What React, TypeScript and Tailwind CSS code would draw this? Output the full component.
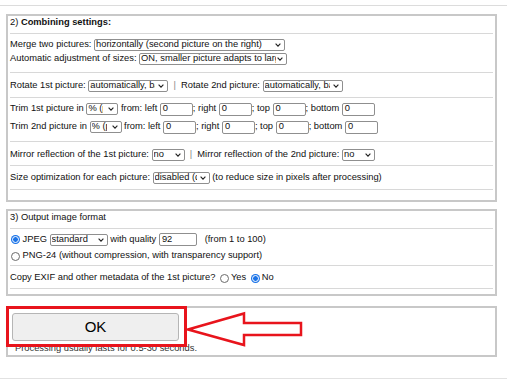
import React from "react";

const Chev = () => (
  <svg width="6" height="4" viewBox="0 0 6 4" className="shrink-0">
    <path d="M0.6 0.6 L3 3.2 L5.4 0.6" fill="none" stroke="#222" strokeWidth="1.1" />
  </svg>
);

function Sel({ w, text, gap = 1 }: { w: number; text: string; gap?: number }) {
  return (
    <div
      className="inline-flex items-center h-[12px] border border-[#8f8f8f] rounded-[2px] bg-white pl-[1px] pr-[3px] overflow-hidden shrink-0"
      style={{ width: w }}
    >
      <span className="flex-1 overflow-hidden whitespace-nowrap leading-none" style={{ marginRight: gap }}>
        {text}
      </span>
      <Chev />
    </div>
  );
}

function Inp({ w, val }: { w: number; val: string }) {
  return (
    <div
      className="inline-flex items-center h-[13px] border border-[#8f8f8f] rounded-[2px] bg-white px-[2px] shrink-0 leading-none"
      style={{ width: w }}
    >
      {val}
    </div>
  );
}

const Hr = ({ mt }: { mt: string }) => <div className={`h-px bg-[#d8d8d8] ${mt}`} />;

function Radio({ on }: { on?: boolean }) {
  return on ? (
    <span className="inline-flex w-[9px] h-[9px] rounded-full bg-[#1a73e8] items-center justify-center shrink-0">
      <span className="w-[5px] h-[5px] rounded-full bg-[#1a73e8] border border-white box-content" />
    </span>
  ) : (
    <span className="inline-block w-[9px] h-[9px] rounded-full border border-[#6b6b6b] bg-white shrink-0" />
  );
}

export default function App() {
  return (
    <div
      className="relative w-[507px] h-[380px] bg-white overflow-hidden text-[9.33px] text-[#111]"
      style={{ fontFamily: '"Liberation Sans", Arial, sans-serif' }}
    >
      <div className="h-[5px]" />
      <div className="h-px bg-[#dcdcdc]" />

      {/* Fieldset 1 */}
      <div className="ml-[6px] mt-[8px] w-[491px] h-[188px] border-2 border-[#c8c8c8] px-[2px]">
        <div className="h-[14px] flex items-center whitespace-pre">
          2) <b>Combining settings:</b>
        </div>
        <Hr mt="mt-[3px]" />
        <div className="mt-[4px] h-[14px] flex items-center whitespace-pre">
          Merge two pictures: <Sel w={191} text="horizontally (second picture on the right)" />
        </div>
        <div className="h-[14px] flex items-center whitespace-pre">
          Automatic adjustment of sizes: <Sel w={148} text="ON, smaller picture adapts to larger" />
        </div>
        <Hr mt="mt-[6px]" />
        <div className="mt-[6px] h-[14px] flex items-center whitespace-pre">
          Rotate 1st picture: <Sel w={80} gap={3} text="automatically, based on EXIF" />
          <span className="text-[#888]">  |  </span>Rotate 2nd picture: <Sel w={80} gap={3} text="automatically, based on EXIF" />
        </div>
        <Hr mt="mt-[4px]" />
        <div className="mt-[2px] h-[18px] flex items-center whitespace-pre">
          Trim 1st picture in <Sel w={32} gap={5} text="% (percent)" /> from: left <Inp w={33} val="0" />; right <Inp w={33} val="0" />; top <Inp w={33} val="0" />; bottom <Inp w={33} val="0" />
        </div>
        <div className="h-[18px] flex items-center whitespace-pre">
          Trim 2nd picture in <Sel w={32} gap={5} text="% (percent)" /> from: left <Inp w={33} val="0" />; right <Inp w={33} val="0" />; top <Inp w={33} val="0" />; bottom <Inp w={33} val="0" />
        </div>
        <Hr mt="mt-[5px]" />
        <div className="mt-[6px] h-[14px] flex items-center whitespace-pre">
          Mirror reflection of the 1st picture: <Sel w={33} text="no" />
          <span className="text-[#888]">  |  </span>Mirror reflection of the 2nd picture: <Sel w={33} text="no" />
        </div>
        <Hr mt="mt-[3px]" />
        <div className="mt-[5px] h-[14px] flex items-center whitespace-pre">
          Size optimization for each picture: <Sel w={57} gap={3} text="disabled (default)" /> (to reduce size in pixels after processing)
        </div>
        <Hr mt="mt-[4px]" />
      </div>

      {/* Fieldset 2 */}
      <div className="ml-[6px] mt-[7px] w-[491px] h-[87px] border-2 border-[#c8c8c8] px-[2px]">
        <div className="h-[14px] flex items-center whitespace-pre">3) Output image format</div>
        <Hr mt="mt-[3px]" />
        <div className="mt-[2px] h-[17px] flex items-center whitespace-pre pl-[1px]">
          <Radio on />
          <span> JPEG </span>
          <Sel w={58} text="standard" /> with quality <Inp w={38} val="92" />   (from 1 to 100)
        </div>
        <div className="h-[16px] flex items-center whitespace-pre pl-[1px]">
          <Radio />
          <span> PNG-24 (without compression, with transparency support)</span>
        </div>
        <Hr mt="mt-[1px]" />
        <div className="mt-[5px] h-[14px] flex items-center whitespace-pre">
          Copy EXIF and other metadata of the 1st picture? <span className="ml-[2px]" />
          <Radio />
          <span className="ml-[2px]">Yes </span>
          <span className="ml-[2px]" />
          <Radio on />
          <span className="ml-[2px]">No</span>
        </div>
        <Hr mt="mt-[3px]" />
      </div>

      {/* Fieldset 3 */}
      <div className="ml-[6px] mt-[10px] w-[491px] h-[51px] border-2 border-[#c8c8c8] pl-[4px] pt-[5px]">
        <div className="w-[167px] h-[28px] bg-[#efefef] border border-[#b5b5b5] rounded-[3px] flex items-center justify-center text-[15px] text-black">
          OK
        </div>
        <div className="mt-[3px] ml-[3px] text-[#333] leading-none">Processing usually lasts for 0.5-30 seconds.</div>
      </div>

      <div className="mt-[21px] h-px bg-[#e2e2e2]" />

      {/* Red highlight box */}
      <div className="absolute left-[6px] top-[306px] w-[181px] h-[41px] border-[3px] border-[#e8141c]" />
      {/* Arrow */}
      <svg className="absolute left-[185px] top-[310px]" width="120" height="38" viewBox="0 0 120 38">
        <polygon
          points="3,19.5 59,3.5 59,13 116,13 116,25 59,25 59,35"
          fill="white"
          stroke="#e8141c"
          strokeWidth="2.5"
          strokeLinejoin="miter"
        />
      </svg>
    </div>
  );
}
